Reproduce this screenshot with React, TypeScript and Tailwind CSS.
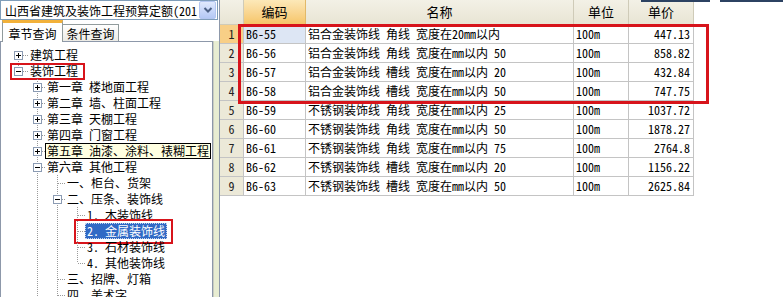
import React from "react";

const F = "font-['Noto_Sans_Mono_CJK_SC','Noto_Sans_CJK_SC','Noto_Sans',sans-serif]";

type Node = {
  level: number;
  text: string;
  box?: "+" | "-";
  next: boolean;
  anc: boolean[];
  first?: boolean;
  sel?: boolean;
  hl?: boolean;
  red?: "a" | "b";
};

const CX = [17, 36, 56, 76];

const nodes: Node[] = [
  { level: 0, text: "建筑工程", box: "+", next: true, anc: [], first: true },
  { level: 0, text: "装饰工程", box: "-", next: false, anc: [], red: "a" },
  { level: 1, text: "第一章 楼地面工程", box: "+", next: true, anc: [false] },
  { level: 1, text: "第二章 墙、柱面工程", box: "+", next: true, anc: [false] },
  { level: 1, text: "第三章 天棚工程", box: "+", next: true, anc: [false] },
  { level: 1, text: "第四章 门窗工程", box: "+", next: true, anc: [false] },
  { level: 1, text: "第五章 油漆、涂料、裱糊工程", box: "+", next: true, anc: [false], hl: true },
  { level: 1, text: "第六章 其他工程", box: "-", next: true, anc: [false] },
  { level: 2, text: "一、柜台、货架", next: true, anc: [false, true] },
  { level: 2, text: "二、压条、装饰线", box: "-", next: true, anc: [false, true] },
  { level: 3, text: "1. 木装饰线", next: true, anc: [false, true, true] },
  { level: 3, text: "2. 金属装饰线", next: true, anc: [false, true, true], sel: true, red: "b" },
  { level: 3, text: "3. 石材装饰线", next: true, anc: [false, true, true] },
  { level: 3, text: "4. 其他装饰线", next: false, anc: [false, true, true] },
  { level: 2, text: "三、招牌、灯箱", next: true, anc: [false, true] },
  { level: 2, text: "四、美术字", next: true, anc: [false, true] },
];

const LINE = "#9a9a9a";

function TreeRow({ n }: { n: Node }) {
  const c = CX[n.level];
  const w = c + 8 + (n.level === 0 ? 2 : 0);
  return (
    <div className="relative flex h-[16px] items-center whitespace-nowrap">
      <svg width={w} height={16} className="shrink-0" shapeRendering="crispEdges">
        {n.anc.map((cont, d) =>
          cont ? (
            <line key={d} x1={CX[d] + 0.5} y1={0} x2={CX[d] + 0.5} y2={16} stroke={LINE} strokeDasharray="1 1" />
          ) : null
        )}
        <line
          x1={c + 0.5}
          y1={n.first ? 8 : 0}
          x2={c + 0.5}
          y2={n.next ? 16 : 8}
          stroke={LINE}
          strokeDasharray="1 1"
        />
        <line x1={c + 1} y1={8.5} x2={w} y2={8.5} stroke={LINE} strokeDasharray="1 1" />
        {n.box && (
          <g>
            <rect x={c - 3.5} y={4.5} width={8} height={8} fill="#ffffff" stroke="#8b9bb3" />
            <line x1={c - 2} y1={8.5} x2={c + 3} y2={8.5} stroke="#000" />
            {n.box === "+" && <line x1={c + 0.5} y1={6} x2={c + 0.5} y2={11} stroke="#000" />}
          </g>
        )}
      </svg>
      {n.hl ? (
        <span className="h-[16px] border border-black bg-[#ffffe1] px-[1px] text-[12px] leading-[14px] text-black">
          {n.text}
        </span>
      ) : n.sel ? (
        <span className="h-[16px] border border-dotted border-[#c9d6ef] bg-[#316ac5] px-[1px] text-[12px] leading-[14px] text-white">
          {n.text}
        </span>
      ) : (
        <span className="px-[2px] text-[12px] leading-[16px] text-black">{n.text}</span>
      )}
      {n.red === "a" && (
        <div className="pointer-events-none absolute left-[9px] top-0 h-[17px] w-[75px] border-2 border-[#d7141b]" />
      )}
      {n.red === "b" && (
        <div className="pointer-events-none absolute left-[73px] top-[-4px] h-[25px] w-[99px] border-2 border-[#d7141b]" />
      )}
    </div>
  );
}

const rows = [
  ["B6-55", "铝合金装饰线 角线 宽度在20mm以内", "100m", "447.13"],
  ["B6-56", "铝合金装饰线 角线 宽度在mm以内 50", "100m", "858.82"],
  ["B6-57", "铝合金装饰线 槽线 宽度在mm以内 20", "100m", "432.84"],
  ["B6-58", "铝合金装饰线 槽线 宽度在mm以内 50", "100m", "747.75"],
  ["B6-59", "不锈钢装饰线 角线 宽度在mm以内 25", "100m", "1037.72"],
  ["B6-60", "不锈钢装饰线 角线 宽度在mm以内 50", "100m", "1878.27"],
  ["B6-61", "不锈钢装饰线 角线 宽度在mm以内 75", "100m", "2764.8"],
  ["B6-62", "不锈钢装饰线 槽线 宽度在mm以内 20", "100m", "1156.22"],
  ["B6-63", "不锈钢装饰线 槽线 宽度在mm以内 50", "100m", "2625.84"],
];

export default function App() {
  return (
    <div className={`flex h-[297px] w-[783px] overflow-hidden bg-white text-black ${F}`}>
      {/* Left column */}
      <div className="flex w-[219px] shrink-0 flex-col">
        {/* combo */}
        <div className="flex h-[22px] w-[218px] items-center border border-[#7f9db9] bg-white">
          <div className="flex-1 overflow-hidden whitespace-nowrap pl-[4px] pt-[1px] text-[12px] leading-[16px]">
            山西省建筑及装饰工程预算定额(201
          </div>
          <div className="mr-[1px] flex h-[18px] w-[17px] items-center justify-center rounded-[2px] border border-[#b3c6f0] bg-gradient-to-b from-[#e0e9fd] to-[#b4c8f5]">
            <svg width="10" height="8" viewBox="0 0 10 8">
              <polyline points="1.5,2 5,5.5 8.5,2" fill="none" stroke="#4d6185" strokeWidth="2" />
            </svg>
          </div>
        </div>
        {/* tabs */}
        <div className="flex h-[22px] items-end pl-[2px]">
          <div className="relative z-10 -mb-px flex h-[22px] w-[61px] items-center justify-center border-x border-t-[3px] border-[#919b9c] border-t-[#f2b13a] bg-white pt-[2px] text-[12px] leading-[16px]">
            章节查询
          </div>
          <div className="flex h-[17px] w-[56px] items-center justify-center border border-b-0 border-l-0 border-[#919b9c] bg-gradient-to-b from-white to-[#ecebe5] pt-[1px] text-[12px] leading-[16px]">
            条件查询
          </div>
        </div>
        {/* tree + splitter */}
        <div className="flex flex-1">
          <div className="w-[213px] overflow-visible border border-[#8d98aa] bg-white pt-[5px]">
            {nodes.map((n, i) => (
              <TreeRow key={i} n={n} />
            ))}
          </div>
          <div className="w-[6px] border-l border-[#c9ccc0] bg-[#e8edd2]" />
        </div>
      </div>

      {/* Right panel */}
      <div className="relative flex-1 border-l border-[#8d98aa] bg-white">
        <div className="absolute left-[421px] top-0 h-[2px] w-[69px] bg-[#2c4262]" />
        <div className="absolute left-[500px] top-0 h-[2px] w-[63px] bg-[#2c4262]" />
        {/* header */}
        <div className="flex h-[25px] text-[13px]">
          <div className="w-[24px] border-b border-r border-[#cfcbb8] bg-gradient-to-b from-[#f3f1e6] to-[#e8e5d4]" />
          <div className="flex w-[62px] items-center justify-center border-b border-r border-[#e2b968] bg-gradient-to-b from-[#fce8b8] to-[#f6c568]">
            编码
          </div>
          <div className="flex w-[268px] items-center justify-center border-b border-r border-[#cfcbb8] bg-gradient-to-b from-[#f3f1e6] to-[#e8e5d4]">
            名称
          </div>
          <div className="flex w-[55px] items-center justify-center border-b border-r border-[#cfcbb8] bg-gradient-to-b from-[#f3f1e6] to-[#e8e5d4]">
            单位
          </div>
          <div className="flex w-[65px] items-center justify-center border-b border-r border-[#cfcbb8] bg-gradient-to-b from-[#f3f1e6] to-[#e8e5d4]">
            单价
          </div>
        </div>
        {rows.map((r, i) => (
          <div key={i} className="flex h-[19px] text-[12px] leading-[18px]">
            <div
              className={`w-[24px] border-b border-r border-[#c4c4c4] text-center text-[#222] ${
                i === 0 ? "bg-[#f8cf86]" : "bg-[#ece9d8]"
              }`}
            >
              {i + 1}
            </div>
            <div
              className={`w-[62px] border-b border-r border-[#c4c4c4] px-[2px] ${
                i === 0 ? "bg-[#dde6f4]" : "bg-white"
              }`}
            >
              {r[0]}
            </div>
            <div className="w-[268px] overflow-hidden whitespace-nowrap border-b border-r border-[#c4c4c4] px-[2px]">
              {r[1]}
            </div>
            <div className="w-[55px] border-b border-r border-[#c4c4c4] px-[2px]">{r[2]}</div>
            <div className="w-[65px] border-b border-r border-[#c4c4c4] pr-[3px] text-right">{r[3]}</div>
          </div>
        ))}
        <div className="pointer-events-none absolute left-[18px] top-[24px] h-[80px] w-[471px] border-[3px] border-[#d7141b]" />
      </div>
    </div>
  );
}
